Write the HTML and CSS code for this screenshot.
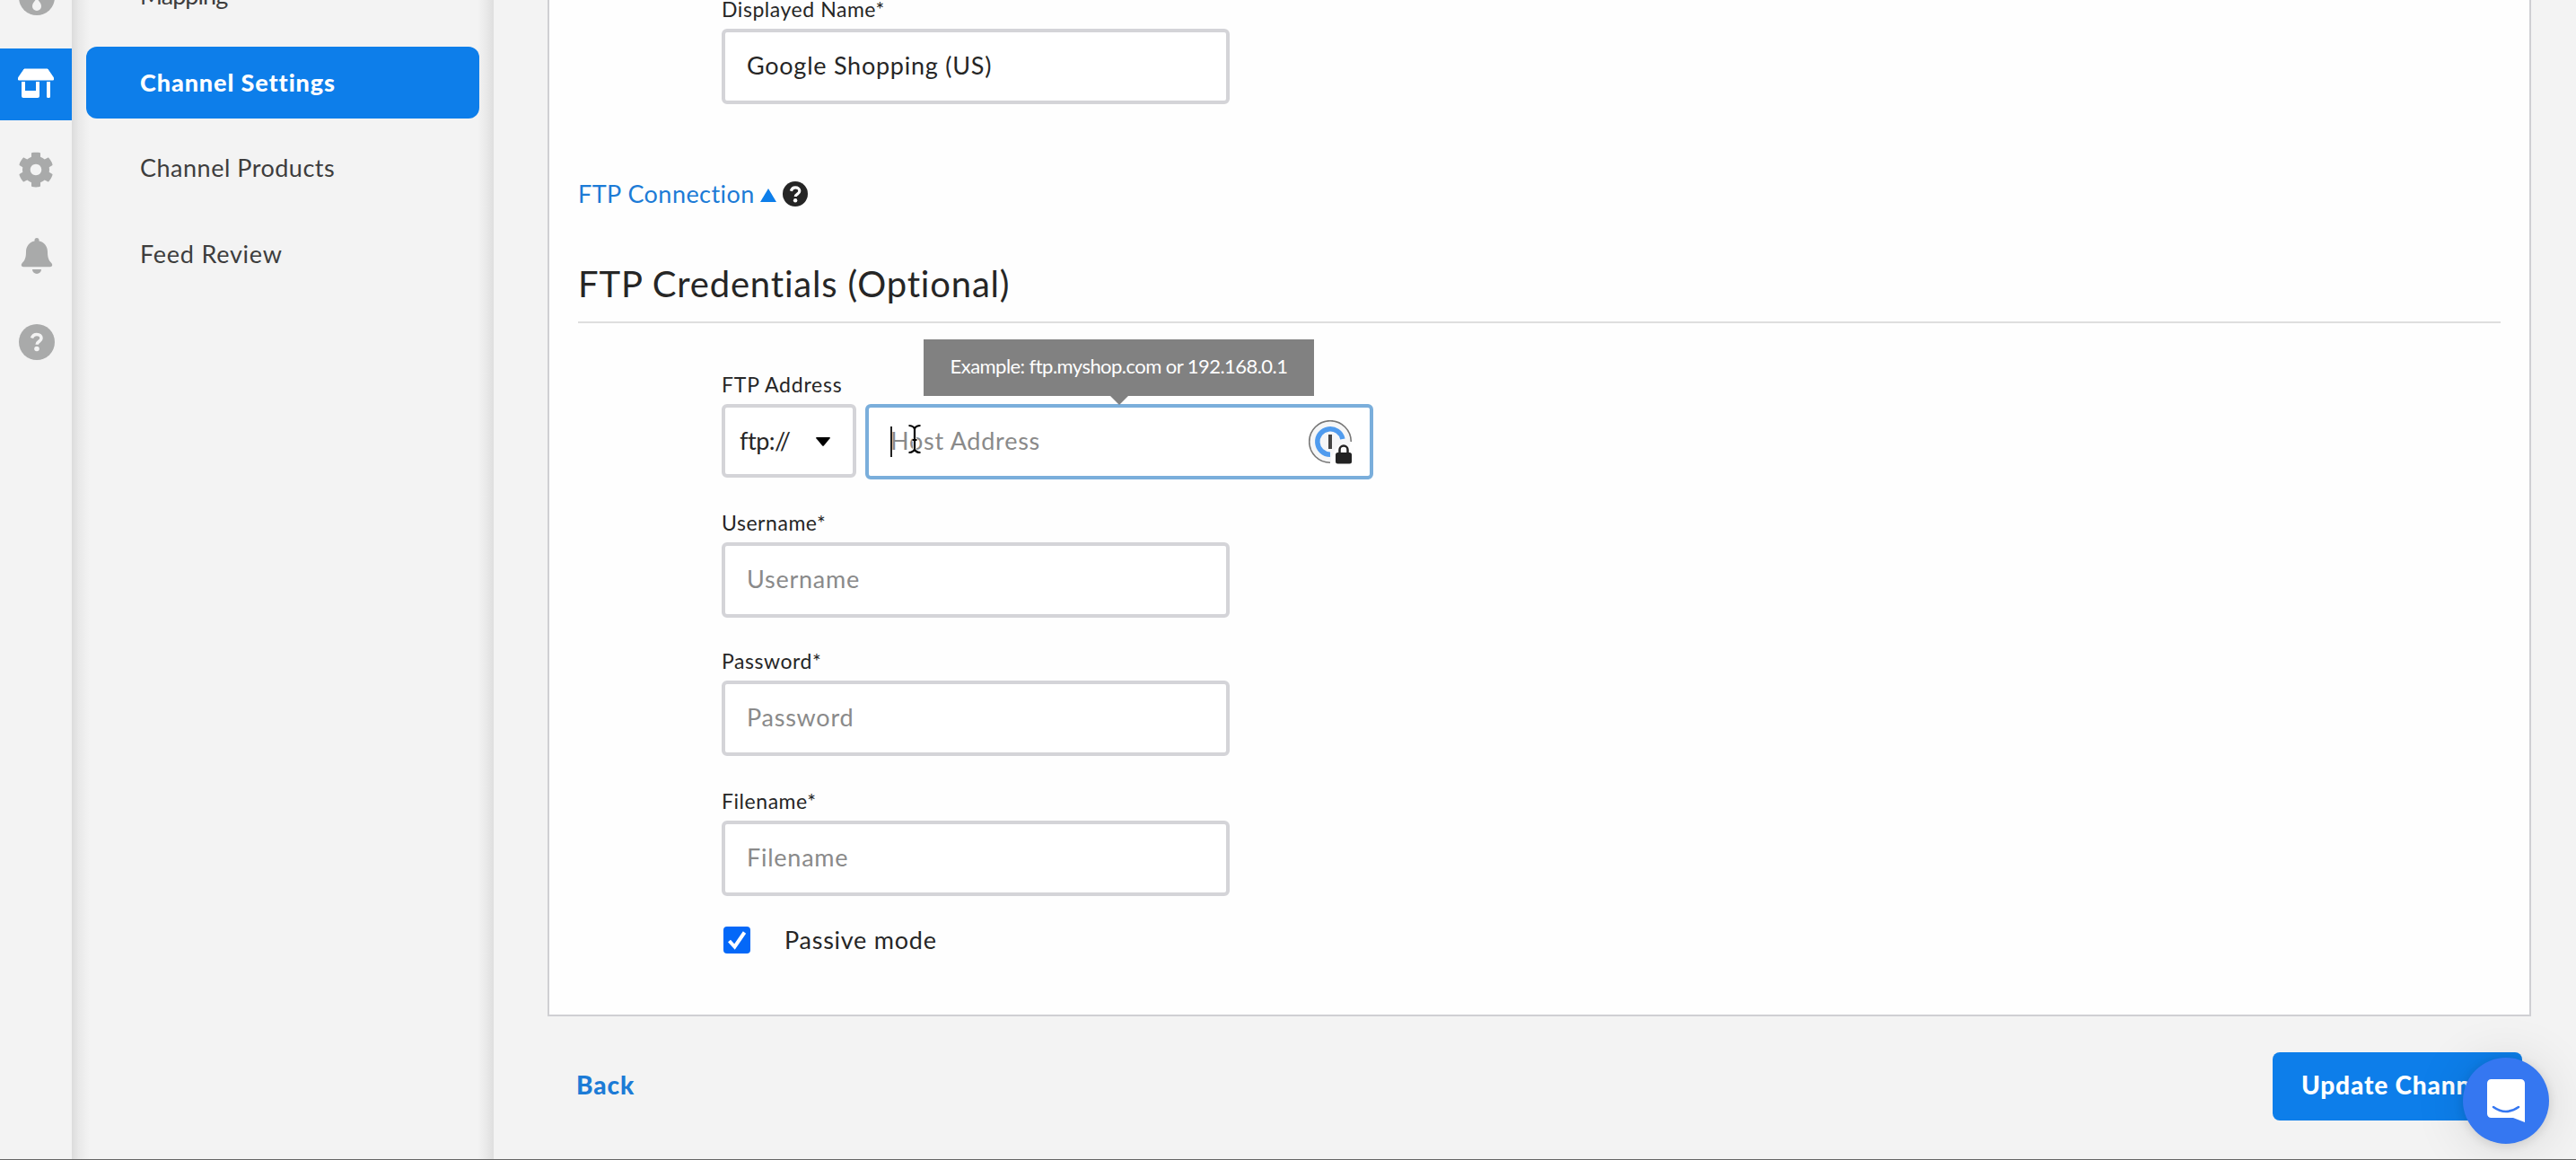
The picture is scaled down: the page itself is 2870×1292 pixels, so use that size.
FILE: index.html
```html
<!DOCTYPE html>
<html lang="en">
<head>
<meta charset="utf-8">
<title>Channel Settings</title>
<link rel="stylesheet" href="styles.css">
</head>
<body>
<div class="app">
  <nav class="rail">
    <a class="rail-item rail-item-round"><svg width="40" height="40" viewBox="0 0 40 40"><circle cx="20" cy="20" r="20" fill="#a9aaaa"/><path d="M20 21c3 4 5 6 5 9a5 5 0 0 1-10 0c0-3 2-5 5-9z" fill="#f3f3f3"/></svg></a>
    <a class="rail-item rail-item-active"><svg width="40" height="40" viewBox="0 0 40 40"><path d="M7 4h26l6.500 9.500v2.500h-39v-2.500z" fill="#fff" stroke="#fff" stroke-width="1" stroke-linejoin="round"/><path d="M4 18h4v10h12V18h4v16a2 2 0 0 1-2 2H6a2 2 0 0 1-2-2zM32 18h4v16.500a1.500 1.500 0 0 1-1.500 1.500h-1a1.500 1.500 0 0 1-1.500-1.500z" fill="#fff"/></svg></a>
    <a class="rail-item"><svg width="40" height="40" viewBox="0 0 512 512"><path fill="#a9aaaa" d="M487.400 315.700l-42.600-24.600c4.300-23.200 4.300-47 0-70.200l42.600-24.600c4.900-2.800 7.100-8.600 5.500-14-11.100-35.600-30-67.800-54.700-94.600-3.800-4.100-10-5.100-14.800-2.300L380.800 110c-17.900-15.400-38.500-27.300-60.800-35.100V25.800c0-5.600-3.900-10.500-9.400-11.700-36.700-8.200-74.300-7.800-109.200 0-5.500 1.200-9.400 6.100-9.400 11.700V75c-22.200 7.900-42.800 19.800-60.800 35.100L88.700 85.500c-4.900-2.800-11-1.900-14.800 2.300-24.700 26.700-43.600 58.900-54.700 94.600-1.700 5.400.6 11.200 5.500 14L67.300 221c-4.300 23.200-4.300 47 0 70.200l-42.600 24.600c-4.900 2.800-7.100 8.600-5.500 14 11.100 35.600 30 67.800 54.700 94.600 3.800 4.100 10 5.100 14.800 2.300l42.600-24.600c17.900 15.400 38.500 27.300 60.800 35.100v49.200c0 5.600 3.900 10.500 9.400 11.700 36.700 8.200 74.300 7.800 109.200 0 5.500-1.200 9.400-6.100 9.400-11.700v-49.200c22.200-7.900 42.800-19.800 60.800-35.100l42.600 24.600c4.900 2.800 11 1.900 14.800-2.300 24.700-26.700 43.600-58.900 54.700-94.600 1.500-5.500-.7-11.300-5.600-14.100zM256 336c-44.100 0-80-35.900-80-80s35.900-80 80-80 80 35.900 80 80-35.900 80-80 80z"/></svg></a>
    <a class="rail-item rail-item-round"><svg width="36" height="40" viewBox="0 0 36 40"><path fill="#a9aaaa" d="M18 0a2.500 2.500 0 0 1 2.500 2.500v1C26.500 4.700 30 9.500 30 15.500c0 7 1.500 9.500 4.500 12.800 1.500 1.900.5 3.900-1.500 3.900H3c-2 0-3-2-1.500-3.900C4.500 25 6 22.500 6 15.500 6 9.500 9.500 4.700 15.500 3.500v-1A2.500 2.500 0 0 1 18 0zM13 35h10a5 5 0 0 1-10 0z"/></svg></a>
    <a class="rail-item rail-item-round"><svg width="40" height="40" viewBox="0 0 40 40"><circle cx="20" cy="20" r="20" fill="#a9aaaa"/><path d="M14.500 15.500c1-3 3-4 5.500-4 3 0 5 1.800 5 4.200 0 3.600-4.800 3.600-4.800 7" fill="none" stroke="#f3f3f3" stroke-width="3.600"/><circle cx="20" cy="27.500" r="2.800" fill="#f3f3f3"/></svg></a>
  </nav>
  <nav class="submenu">
    <a class="submenu-item"><span class="t-map">Mapping</span></a>
    <a class="submenu-item submenu-item-active"><span class="t-set">Channel Settings</span></a>
    <a class="submenu-item"><span class="t-prod">Channel Products</span></a>
    <a class="submenu-item"><span class="t-feed">Feed Review</span></a>
  </nav>
  <main class="main">
    <section class="card">
      <div class="field field-first">
        <label class="label"><span class="t-label">Displayed Name*</span></label>
        <div class="input input-filled"><span class="t-value">Google Shopping (US)</span></div>
      </div>
      <div class="toggle">
        <span class="t-conn">FTP Connection</span>
        <svg class="toggle-arrow" width="18" height="15" viewBox="0 0 18 15"><path d="M9 0l9 15H0z" fill="#0d7eea"/></svg>
        <svg class="toggle-help" width="28" height="28" viewBox="0 0 28 28"><circle cx="14" cy="14" r="14" fill="#252525"/><path d="M9.300 10.800c.8-2.800 2.500-4 4.800-4 2.700 0 4.700 1.600 4.700 4 0 3.400-4.500 3.200-4.500 6.200" fill="none" stroke="#fefefe" stroke-width="3.200"/><circle cx="14.100" cy="21.300" r="2.200" fill="#fefefe"/></svg>
      </div>
      <h2 class="title"><span class="t-title">FTP Credentials (Optional)</span></h2>
      <div class="field field-address">
        <label class="label"><span class="t-addr">FTP Address</span></label>
        <div class="address-row">
          <div class="select"><span class="t-ftp">ftp://</span><svg class="select-arrow" width="16" height="10" viewBox="0 0 16 10"><path d="M1 0h14q1.500 0 .6 1.300L9 9.300q-1 1-2 0L.4 1.300Q-.5 0 1 0z" fill="#000"/></svg></div>
          <div class="input input-focus">
            <span class="t-value">Host Address</span>
            <span class="text-caret"></span>
            <svg class="ibeam" width="16" height="34" viewBox="0 0 16 34"><path d="M1.500 2q5 0 6.500 3.500Q9.500 2 14.500 2M8 5v24M1.500 32q5 0 6.500-3.500 1.500 3.500 6.500 3.500M5.500 18h5" fill="none" stroke="#fff" stroke-width="4"/><path d="M1.500 2q5 0 6.500 3.500Q9.500 2 14.500 2M8 5v24M1.500 32q5 0 6.500-3.500 1.500 3.500 6.500 3.500M5.500 18h5" fill="none" stroke="#000" stroke-width="2.200"/></svg>
            <svg class="key-icon" width="50" height="50" viewBox="0 0 50 50"><circle cx="24" cy="24" r="22.500" fill="#f5f6f7"/><path d="M24 47.300A23.300 23.300 0 1 1 47.300 24" fill="none" stroke="#777" stroke-width="1.600"/><path d="M24 38.200A14.200 14.200 0 1 1 37.900 21" fill="none" stroke="#4f9bee" stroke-width="5.500"/><path d="M22 16h4v16h-4z" fill="#444"/><path d="M25 50V42l4-8 4-6h8l5 2h4v20z" fill="#fefefe"/><path d="M34.500 37v-4a4.500 4.500 0 0 1 9 0v4" fill="none" stroke="#222" stroke-width="2.500"/><rect x="30" y="36" width="18" height="12.500" rx="2.500" fill="#222"/></svg>
            <div class="tooltip"><span class="t-tip">Example: ftp.myshop.com or 192.168.0.1</span></div>
          </div>
        </div>
      </div>
      <div class="field field-user">
        <label class="label"><span class="t-label">Username*</span></label>
        <div class="input"><span class="t-value">Username</span></div>
      </div>
      <div class="field field-pass">
        <label class="label"><span class="t-label">Password*</span></label>
        <div class="input"><span class="t-value">Password</span></div>
      </div>
      <div class="field field-file">
        <label class="label"><span class="t-label">Filename*</span></label>
        <div class="input"><span class="t-value">Filename</span></div>
      </div>
      <div class="check-row">
        <svg width="30" height="30" viewBox="0 0 30 30"><rect width="30" height="30" rx="4" fill="#0468f8"/><path d="M6.500 16l6 6.500L23.500 6.500" fill="none" stroke="#fff" stroke-width="4"/></svg>
        <span class="t-value">Passive mode</span>
      </div>
    </section>
    <footer class="footer">
      <a class="back"><span class="t-back">Back</span></a>
      <a class="button"><span class="t-upd">Update Channel</span></a>
    </footer>
  </main>
</div>
<div class="chat"><svg width="42" height="48" viewBox="0 0 42 48"><path d="M4.500 0h33A4.500 4.500 0 0 1 42 4.500V48l-13-5H4.500A4.500 4.500 0 0 1 0 38.500v-34A4.500 4.500 0 0 1 4.500 0z" fill="#fff"/><path d="M7 31q14 10 28 0" fill="none" stroke="#3577f1" stroke-width="2.500" stroke-linecap="round"/></svg></div>
</body>
</html>
```
FILE: styles.css
```css
* { box-sizing: border-box; }
html, body { margin: 0; height: 1292px; overflow: hidden; }
body { position: relative; background: #f3f3f3; font-family: Lato, "Open Sans", sans-serif; font-size: 27px; color: #262626; }
span { white-space: nowrap; }
svg { display: block; flex: none; }
.app { display: flex; height: 1292px; border-bottom: 1px solid #666; overflow: hidden; }

/* tracking per text style */
.t-map { letter-spacing: -0.95px; }
.t-set { letter-spacing: 0.9px; }
.t-prod { letter-spacing: 0.5px; }
.t-feed { letter-spacing: 0.75px; }
.t-label { letter-spacing: 0.55px; }
.t-value { letter-spacing: 0.75px; }
.t-conn { letter-spacing: 0.45px; }
.t-title { letter-spacing: 0.83px; }
.t-addr { letter-spacing: 0.78px; }
.t-ftp { letter-spacing: -0.5px; }
.t-tip { letter-spacing: -0.55px; }
.t-back { font-size: 28px; letter-spacing: 0.9px; }
.t-upd { font-size: 28px; letter-spacing: 0.85px; }

.rail { width: 80px; flex: none; display: flex; flex-direction: column; gap: 16px; margin-top: -42px; }
.rail-item { height: 80px; flex: none; display: flex; align-items: center; justify-content: center; padding-bottom: 2px; }
.rail-item-round { padding-left: 2px; }
.rail-item-active { background: #0d7eea; }

.submenu { width: 470px; flex: none; display: flex; flex-direction: column; gap: 16px; padding: 0 16px; color: #3d3d3d;
  background: linear-gradient(90deg, #dcdcdc, #e9e9e9 8px, #f3f3f3 20px, #f3f3f3 452px, #e9e9e9 462px, #dedede); }
.submenu-item { height: 80px; flex: none; display: flex; align-items: center; padding: 0 0 3px 60px; border-radius: 12px; }
.submenu-item:first-child { margin-top: -44px; }
.submenu-item-active { background: #0d7eea; color: #fff; font-weight: 900; padding-bottom: 2px; }

.main { flex: 1; padding: 0 50px 0 60px; }
.card { display: flow-root; height: 1132px; padding: 0 32px; background: #fefefe; border: 2px solid #cfcfd3; border-top: 0; }
.field { padding-left: 160px; }
.field-first { margin-top: -6px; }
.field-address { margin-top: 52px; }
.field-user, .field-pass { margin-top: 32px; }
.field-file { margin-top: 34px; }
.label { display: block; height: 32px; line-height: 32px; font-size: 23px; margin-bottom: 6px; }
.input { position: relative; width: 566px; height: 84px; border: 4px solid #d4d4d8; border-radius: 6px; background: #fff; padding: 0 24px 3px; display: flex; align-items: center; color: #8a8a8a; }
.input-filled { color: #262626; }
.input-focus { border-color: #7aaedb; }
.toggle { display: flex; height: 32px; line-height: 32px; margin-top: 84px; color: #1c7bd6; }
.toggle-arrow { margin: 10px 0 0 6px; }
.toggle-help { margin: 2px 0 0 7px; }
.title { margin: 60px 0 0; height: 68px; line-height: 48px; font-size: 40px; font-weight: 400; border-bottom: 2px solid #dedede; }
.address-row { display: flex; gap: 10px; }
.select { width: 150px; height: 82px; border: 4px solid #d4d4d8; border-radius: 6px; display: flex; align-items: center; justify-content: space-between; padding: 0 25px 2px 16px; background: #fff; }
.select-arrow { margin-top: 4px; }
.text-caret { position: absolute; left: 24px; top: 21px; width: 2px; height: 34px; background: #222; }
.ibeam { position: absolute; left: 43px; top: 18px; }
.key-icon { position: absolute; left: 490px; top: 14px; }
.tooltip { position: absolute; left: 61px; top: -76px; width: 435px; height: 63px; padding-bottom: 4px; background: #818181; color: #fff; font-size: 22px; display: flex; align-items: center; justify-content: center; }
.tooltip::after { content: ""; position: absolute; left: 208px; top: 63px; border: 10px solid transparent; border-top-color: #818181; border-bottom: 0; }
.check-row { display: flex; align-items: center; gap: 38px; height: 30px; line-height: 30px; margin: 34px 0 0 162px; }

.footer { display: flex; align-items: center; justify-content: space-between; height: 76px; margin-top: 40px; padding: 0 10px 0 32px; font-weight: 900; }
.back { color: #1c7bd6; padding-bottom: 4px; }
.button { width: 278px; height: 76px; padding: 0 0 4px 32px; display: flex; align-items: center; border-radius: 8px; background: #0d7eea; color: #fff; }
.chat { position: absolute; left: 2744px; top: 1178px; width: 96px; height: 96px; border-radius: 50%; background: #3577f1; display: flex; align-items: center; justify-content: center; box-shadow: 0 2px 12px rgba(0,0,0,.12), 0 4px 60px rgba(0,0,0,.12); }
```
